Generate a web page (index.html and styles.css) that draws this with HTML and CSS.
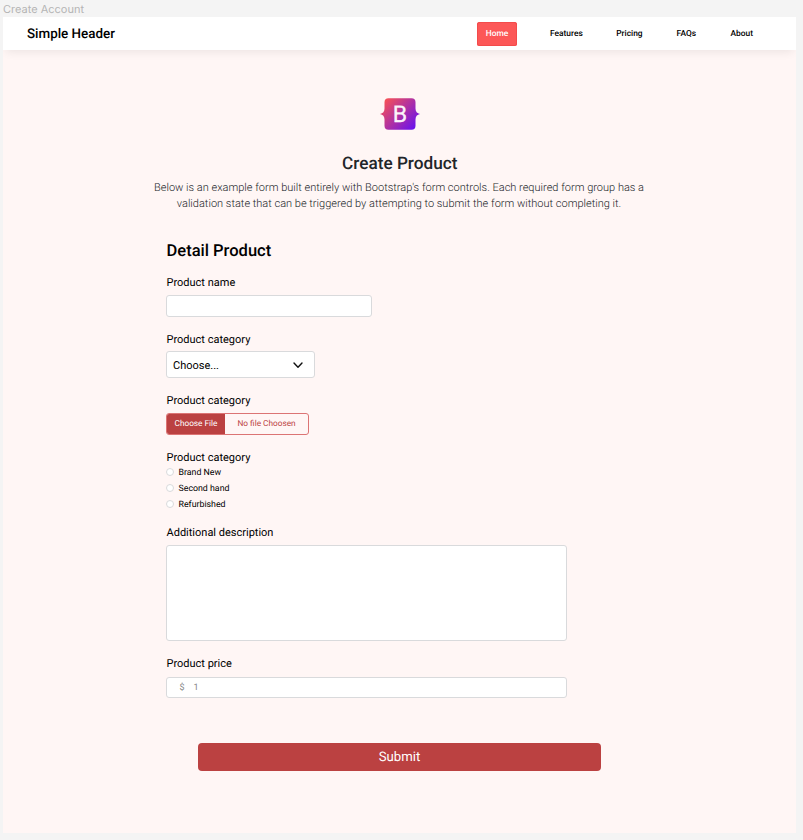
FILE: index.html
```html
<!DOCTYPE html>
<html lang="en">
<head>
<meta charset="utf-8">
<title>Create Account</title>
<link rel="stylesheet" href="styles.css">
</head>
<body>
<div class="frame-name">Create Account</div>
<div class="frame">
  <header class="header">
    <div class="brand">Simple Header</div>
    <nav class="nav">
      <a class="nav-link active">Home</a>
      <a class="nav-link features">Features</a>
      <a class="nav-link pricing">Pricing</a>
      <a class="nav-link faqs">FAQs</a>
      <a class="nav-link">About</a>
    </nav>
  </header>
  <main>
    <section class="intro">
      <svg class="logo" width="40" height="32" viewBox="0 0 40 32">
        <defs><linearGradient id="g" x1="4" y1="1" x2="36" y2="31" gradientUnits="userSpaceOnUse"><stop offset="0" stop-color="#fa5252"/><stop offset="1" stop-color="#6610f2"/></linearGradient></defs>
        <path fill="url(#g)" d="M8.500 .3h23a4 4 0 0 1 4 4v6.200c0 3 1.500 5 4.500 5.500-3 .5-4.500 2.500-4.500 5.500v6.200a4 4 0 0 1-4 4h-23a4 4 0 0 1-4-4v-6.200c0-3-1.500-5-4.500-5.500 3-.5 4.500-2.500 4.500-5.500V4.300a4 4 0 0 1 4-4z"/>
        <text class="logo-letter" x="20" y="24" text-anchor="middle">B</text>
      </svg>
      <h1>Create Product</h1>
      <p>Below is an example form built entirely with Bootstrap's form controls. Each required form group has a<br>validation state that can be triggered by attempting to submit the form without completing it.</p>
    </section>
    <form class="form">
      <h2>Detail Product</h2>
      <div class="label name-label">Product name</div>
      <div class="box name-input"></div>
      <div class="label select-label">Product category</div>
      <div class="box select"><span>Choose...</span>
        <svg width="10" height="7" viewBox="0 0 10 7"><path d="M1 1l4 4.300L9 1" fill="none" stroke="#111" stroke-width="1.400" stroke-linecap="round" stroke-linejoin="round"/></svg>
      </div>
      <div class="label">Product category</div>
      <div class="file"><span class="choose">Choose File</span><span class="none">No file Choosen</span></div>
      <div class="label radios-label">Product category</div>
      <div class="radio"><i></i><span>Brand New</span></div>
      <div class="radio"><i></i><span>Second hand</span></div>
      <div class="radio"><i></i><span>Refurbished</span></div>
      <div class="label description-label">Additional description</div>
      <div class="box textarea"></div>
      <div class="label price-label">Product price</div>
      <div class="box price"><span>$</span><span>1</span></div>
      <div class="submit">Submit</div>
    </form>
  </main>
</div>
</body>
</html>
```
FILE: styles.css
```css
* { box-sizing: border-box; }
body { margin: 0; height: 840px; overflow: hidden; background: #f4f4f4; color: #000; font-family: Roboto, sans-serif; text-rendering: geometricPrecision; }
.frame-name { height: 17px; padding-left: 3px; font: 11px/18px Inter, sans-serif; color: #b5b5b5; }
.frame { width: 793px; height: 816px; margin-left: 3px; background: #fff6f5; overflow: hidden; }
.header { display: flex; justify-content: space-between; align-items: center; height: 33px; padding: 0 43px 0 24px; background: #fff; box-shadow: 0 5px 10px -3px rgba(0, 0, 0, .08); }
.brand { font-size: 13.400px; font-weight: 500; line-height: 36px; height: 33px; }
.nav { display: flex; align-items: center; font-size: 8.400px; font-weight: 500; }
.nav-link { line-height: 24px; }
.active { width: 40px; margin-right: 33px; border-radius: 2.500px; background: #fc5757; box-shadow: inset 0 0 0 1px #f34b4b; color: #fff; text-align: center; }
.features { margin-right: 33.500px; }
.pricing { margin-right: 34px; }
.faqs { margin-right: 34.500px; }
.intro { display: flex; flex-direction: column; align-items: center; padding-top: 48px; text-align: center; }
.logo { display: block; }
.logo-letter { font: 400 23px Roboto, sans-serif; fill: #fff; fill-opacity: .95; stroke: #fff; stroke-width: .3px; }
h1 { height: 24px; margin: 21px 0 0; padding-left: .5px; font-size: 17.200px; font-weight: 500; line-height: 27px; color: #212529; }
.intro p { height: 33px; margin: 4px 0 0; padding: .5px 1px 0 0; font-size: 11.020px; font-weight: 300; line-height: 16.500px; color: #212529; white-space: nowrap; }
.form { padding-left: 163px; }
h2 { height: 24px; margin: 26px 0 0; padding-left: .5px; font-size: 16.520px; font-weight: 500; line-height: 28px; }
.label { height: 14px; margin: 16px 0 5px; padding-left: .5px; font-size: 11.010px; line-height: 14px; }
.name-label { margin-top: 14px; }
.select-label { margin-bottom: 4px; }
.box { border: 1px solid #d9dadc; border-radius: 3px; background: #fff; }
.name-input { width: 206px; height: 22px; }
.select { display: flex; align-items: center; justify-content: space-between; width: 149px; height: 27px; padding: 1px 11px 0 6px; font-size: 11.010px; }
.file { display: flex; width: 143px; height: 22px; overflow: hidden; border: 1px solid #dc7474; border-radius: 3px; font-size: 8.260px; line-height: 21px; text-align: center; }
.choose { width: 58px; background: #bb4141; color: #fff; }
.none { flex: 1; color: #bb4141; }
.radios-label { margin-bottom: 0; }
.radio { display: flex; align-items: center; height: 16px; font-size: 8.800px; }
.radio i { width: 8px; height: 8px; margin: -2px 4.500px 0 0; border: 1px solid #d9dadc; border-radius: 50%; background: #fff; }
.description-label { margin-top: 13px; }
.textarea { width: 401px; height: 96px; }
.price-label { margin-bottom: 6px; }
.price { display: flex; align-items: center; gap: 9px; width: 401px; height: 21px; padding-left: 12.500px; font-size: 9px; color: #868686; }
.submit { width: 403px; height: 28px; margin: 45px 0 0 32px; border-radius: 4px; background: #bb4141; color: #fff; font-size: 13.200px; line-height: 30px; text-align: center; }
```
